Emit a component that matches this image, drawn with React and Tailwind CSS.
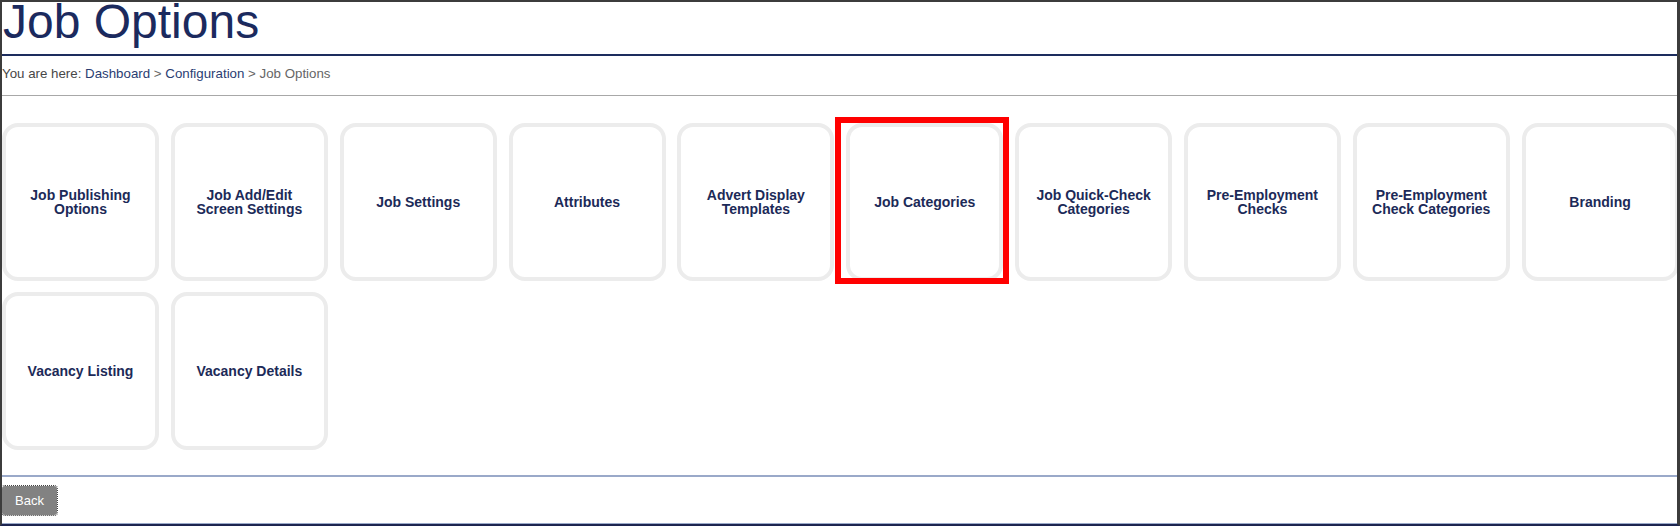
const tiles = [
  "Job Publishing Options",
  "Job Add/Edit Screen Settings",
  "Job Settings",
  "Attributes",
  "Advert Display Templates",
  "Job Categories",
  "Job Quick-Check Categories",
  "Pre-Employment Checks",
  "Pre-Employment Check Categories",
  "Branding",
  "Vacancy Listing",
  "Vacancy Details",
];

function Tile({ label, highlighted }) {
  return (
    <div className="relative h-[158px] w-[157px]">
      <a
        href="#"
        className="flex h-full w-full items-center justify-center rounded-[16px] border-4 border-[#ececec] bg-white px-[10px] text-center text-[14px] font-bold leading-[14px] text-[#1c2a58]"
      >
        {label}
      </a>
      {highlighted && (
        <div className="pointer-events-none absolute -left-[11px] -right-[6px] -top-[6px] -bottom-[3px] border-[6px] border-[#ff0000]" />
      )}
    </div>
  );
}

export default function App() {
  return (
    <div className="flex h-[526px] w-full flex-col overflow-hidden border-t-2 border-l-2 border-r-[3px] border-b-2 border-[#3c3c3c] border-b-[#1d2550] bg-white font-['Liberation_Sans',Arial,sans-serif]">
      <h1 className="pl-px text-[48px] leading-[40px] text-[#1b2a5e]">Job Options</h1>
      <div className="mt-[12px] h-[2px] bg-[#1d2d5e]" />

      <div className="pt-[10px] pb-[13px] text-[13.3px] leading-[16px] text-[#474747]">
        You are here:{" "}
        <a href="#" className="text-[#2a3d72]">Dashboard</a>
        <span className="text-[#666]"> &gt; </span>
        <a href="#" className="text-[#2a3d72]">Configuration</a>
        <span className="text-[#666]"> &gt; Job Options</span>
      </div>
      <div className="h-px bg-[#a8a8a8]" />

      <div className="mt-[27px] grid grid-cols-[repeat(10,157px)] gap-x-[11.85px] gap-y-[11px]">
        {tiles.map((t) => (
          <Tile key={t} label={t} highlighted={t === "Job Categories"} />
        ))}
      </div>

      <div className="mt-[25px] h-[2px] bg-[#9aa9c9]" />
      <div className="mt-[9px]">
        <button className="h-[29px] w-[55px] rounded-[3px] bg-[#828282] text-[13px] text-white outline outline-1 outline-dotted outline-[#444]">
          Back
        </button>
      </div>
      <div className="mt-auto h-px bg-[#9aa9c9]" />
    </div>
  );
}
